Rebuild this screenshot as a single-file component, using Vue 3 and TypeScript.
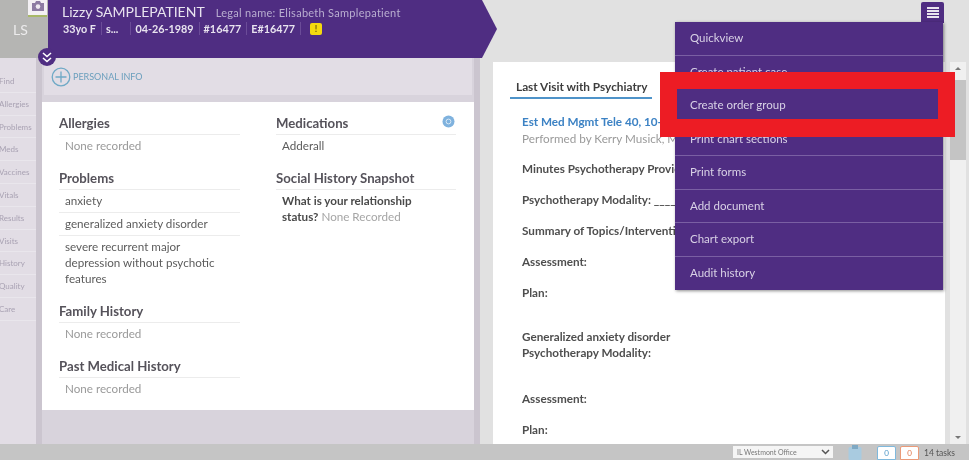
<template>
  <div class="page">
    <header class="top">
      <div class="avatar">
        <span class="camera">
          <svg width="14" height="12" viewBox="0 0 14 12">
            <path d="M1 3h3l1-2h4l1 2h3v8H1z" fill="#8d7ba3" />
            <circle cx="7" cy="6.6" r="2.3" fill="#efeaf2" />
          </svg>
        </span>
        <span class="initials">LS</span>
      </div>
      <div class="banner">
        <div class="name-row">
          <span class="name">Lizzy SAMPLEPATIENT</span>
          <span class="legal">Legal name: Elisabeth Samplepatient</span>
        </div>
        <div class="meta-row">
          <span v-for="item in meta" :key="item" class="meta">{{ item }}</span>
          <span class="alert">!</span>
        </div>
      </div>
      <span class="collapse">
        <svg width="12" height="13" viewBox="0 0 12 13" fill="none" stroke="#fff" stroke-width="1.6">
          <path d="M2 2l4 3.5L10 2M2 7l4 3.5L10 7" />
        </svg>
      </span>
    </header>

    <div class="body">
      <nav class="rail">
        <div v-for="item in rail" :key="item" class="rail-item">{{ item }}</div>
      </nav>

      <section class="left">
        <div class="personal">
          <svg width="20" height="20" viewBox="0 0 20 20" fill="none" stroke="#6fa9c6" stroke-width="1.3">
            <circle cx="10" cy="10" r="8.8" />
            <path d="M10 4.5v11M4.5 10h11" />
          </svg>
          <span>PERSONAL INFO</span>
        </div>
        <div class="summary">
          <div class="col">
            <template v-for="group in leftGroups" :key="group.title">
              <h3>{{ group.title }}</h3>
              <p v-for="row in group.rows" :key="row" class="row" :class="{ empty: group.empty }">{{ row }}</p>
            </template>
          </div>
          <div class="col">
            <h3>Medications</h3>
            <p class="row">Adderall</p>
            <h3>Social History Snapshot</h3>
            <p class="row question"><b>What is your relationship status?</b> <span>None Recorded</span></p>
          </div>
          <span class="gear">
            <svg width="13" height="13" viewBox="0 0 13 13">
              <circle cx="6.5" cy="6.5" r="6" fill="#7fb2de" />
              <circle cx="6.5" cy="6.5" r="2.4" fill="none" stroke="#d9e9f6" />
            </svg>
          </span>
        </div>
      </section>

      <section class="right">
        <div class="visit">
          <div class="tabs"><span class="tab">Last Visit with Psychiatry</span></div>
          <div class="note">
            <a class="link">Est Med Mgmt Tele 40, 10-28-2020</a>
            <p class="by">Performed by Kerry Musick, MD</p>
            <p v-for="line in note" :key="line.text" class="line" :class="line.gap">{{ line.text }}</p>
          </div>
        </div>
        <div class="scrollbar"><span class="arrow up"></span><span class="thumb"></span><span class="arrow down"></span></div>
      </section>
    </div>

    <footer class="foot">
      <div class="office">IL Westmont Office<svg width="9" height="6" viewBox="0 0 9 6" fill="none" stroke="#555" stroke-width="1.5"><path d="M1 1l3.5 3.5L8 1" /></svg></div>
      <svg class="clip" width="14" height="15" viewBox="0 0 14 15">
        <rect x="0.5" y="2" width="13" height="13" rx="1.5" fill="#a9cbe0" />
        <rect x="4" y="0" width="6" height="4" fill="#7fa9c4" />
      </svg>
      <span class="count blue">0</span>
      <span class="count orange">0</span>
      <span class="tasks">14 tasks</span>
    </footer>

    <button class="burger">
      <svg width="12" height="11" viewBox="0 0 12 11" fill="#e9e4ee">
        <rect y="0" width="12" height="2" /><rect y="3" width="12" height="2" /><rect y="6" width="12" height="2" /><rect y="9" width="12" height="2" />
      </svg>
    </button>
    <ul class="menu">
      <li v-for="item in menu" :key="item">{{ item }}</li>
    </ul>
    <div class="callout"></div>
  </div>
</template>

<script setup lang="ts">
const meta = ['33yo F', 's...', '04-26-1989', '#16477', 'E#16477']
const rail = ['Find', 'Allergies', 'Problems', 'Meds', 'Vaccines', 'Vitals', 'Results', 'Visits', 'History', 'Quality', 'Care']
const menu = ['Quickview', 'Create patient case', 'Create order group', 'Print chart sections', 'Print forms', 'Add document', 'Chart export', 'Audit history']

const leftGroups = [
  { title: 'Allergies', rows: ['None recorded'], empty: true },
  { title: 'Problems', rows: ['anxiety', 'generalized anxiety disorder', 'severe recurrent major depression without psychotic features'], empty: false },
  { title: 'Family History', rows: ['None recorded'], empty: true },
  { title: 'Past Medical History', rows: ['None recorded'], empty: true },
]

const note = [
  { text: 'Minutes Psychotherapy Provided:', gap: 'g1' },
  { text: 'Psychotherapy Modality: ______', gap: 'g2' },
  { text: 'Summary of Topics/Interventions:', gap: 'g2' },
  { text: 'Assessment:', gap: 'g2' },
  { text: 'Plan:', gap: 'g2' },
  { text: 'Generalized anxiety disorder', gap: 'g3' },
  { text: 'Psychotherapy Modality:', gap: 'g0' },
  { text: 'Assessment:', gap: 'g4' },
  { text: 'Plan:', gap: 'g2' },
]
</script>

<style>
html, body { margin: 0; overflow: hidden; }
</style>

<style scoped>
.page {
  position: relative;
  display: flex;
  flex-direction: column;
  width: 969px;
  height: 460px;
  overflow: hidden;
  background: #e1e1e1;
  font-family: Lato, "Open Sans", sans-serif;
  color: #4a4a4a;
  filter: blur(0.55px);
}

.top {
  position: relative;
  display: flex;
  height: 58px;
  flex: none;
}
.avatar {
  position: relative;
  width: 48px;
  background: #b5b5b3;
  display: flex;
  align-items: center;
  padding-left: 13px;
  box-sizing: border-box;
}
.initials { color: #ecebec; font-size: 14px; margin-top: 1px; }
.camera {
  position: absolute;
  top: 0;
  right: 1px;
  width: 19px;
  height: 15px;
  background: #f3f0f4;
  border-bottom: 2px solid #a8b868;
  display: flex;
  justify-content: center;
}
.banner {
  width: 449px;
  background: #4f2d82;
  clip-path: polygon(0 0, 434px 0, 100% 50%, 434px 100%, 0 100%);
  padding: 3px 0 0 15px;
  box-sizing: border-box;
  color: #e8e3ef;
}
.name-row { display: flex; align-items: baseline; gap: 11px; }
.name { font-size: 14px; line-height: 18px; margin-left: -1px; }
.legal { font-size: 11px; color: #b9aed0; letter-spacing: 0.28px; }
.meta-row { display: flex; align-items: center; font-size: 10.8px; font-weight: 700; margin-top: 1px; }
.meta { padding-right: 5px; margin-right: 4px; border-right: 1px solid #6b4c98; line-height: 13px; }
.meta:nth-child(2) { padding-right: 12px; }
.alert {
  width: 12px;
  height: 12px;
  margin-left: 5px;
  border-radius: 2px;
  background: #f5d90f;
  color: #6d5a10;
  font-size: 9px;
  line-height: 12px;
  text-align: center;
}
.collapse {
  position: absolute;
  left: 38px;
  top: 48px;
  z-index: 2;
  width: 18px;
  height: 18px;
  border-radius: 50%;
  background: #4f2d82;
  display: flex;
  align-items: center;
  justify-content: center;
}

.body { flex: 1; display: flex; min-height: 0; }
.rail {
  width: 36px;
  flex: none;
  background: #e2dde5;
  padding-top: 12px;
  box-sizing: border-box;
  overflow: hidden;
}
.rail-item {
  height: 22.8px;
  line-height: 22px;
  font-size: 8px;
  color: #a9a2b3;
  white-space: nowrap;
  margin-left: -1px;
  border-bottom: 1px solid #e9e6ec;
  box-sizing: border-box;
}

.left {
  width: 444px;
  flex: none;
  box-sizing: border-box;
  background: #d8d3dc;
  border-left: 6px solid #cbc5cf;
  border-right: 6px solid #cbc5cf;
}
.personal {
  height: 37px;
  margin: 0 2px;
  background: #e2dde5;
  display: flex;
  align-items: center;
  gap: 2px;
  padding: 0 8px 0 7px;
  box-sizing: border-box;
  color: #6b9fbd;
  font-size: 9px;
}
.summary {
  position: relative;
  margin-top: 7px;
  height: 308px;
  background: #fff;
  display: grid;
  grid-template-columns: 181px 180px;
  column-gap: 36px;
  padding: 9px 18px 0 17px;
  box-sizing: border-box;
}
.col { min-width: 0; }
h3 {
  margin: 0;
  padding: 4px 0 3px;
  font-size: 13.2px;
  line-height: 16px;
  font-weight: 700;
  color: #55525a;
  border-bottom: 1px solid #ececec;
}
.row {
  margin: 0;
  padding: 3px 6px;
  font-size: 11.65px;
  line-height: 16px;
  border-bottom: 1px solid #ececec;
  color: #5c5c5c;
}
.row:last-child { border-bottom: 0; }
.row.empty { color: #9a9a9a; border-bottom: 0; padding-bottom: 12px; }
.col > .row:has(+ h3) { border-bottom: 0; padding-bottom: 12px; }
.question b { color: #4a4a4a; }
.question span { color: #a5a5a5; }
.gear { position: absolute; top: 10px; right: 19px; }

.right {
  flex: 1;
  min-width: 0;
  display: flex;
  padding: 4px 3px 0 13px;
}
.visit { flex: 1; min-width: 0; background: #fff; padding: 13px 0 0 17px; overflow: hidden; }
.tab {
  display: inline-block;
  padding: 0 5px 3px 6px;
  font-size: 11.8px;
  line-height: 14px;
  font-weight: 700;
  color: #3d3d3d;
  border-bottom: 2px solid #4e93c9;
}
.note { padding: 15px 0 0 12px; font-size: 11.7px; line-height: 15px; }
.link { display: block; color: #3c82c4; font-weight: 700; }
.by { margin: 2px 0 0; color: #9a9a9a; }
.line { margin: 0; font-weight: 700; color: #4e4e4e; }
.g0 { margin-top: 1px; }
.g1 { margin-top: 15px; }
.g2 { margin-top: 16px; }
.g3 { margin-top: 29px; }
.g4 { margin-top: 31px; }
.scrollbar {
  width: 16px;
  margin-left: 5px;
  background: #f0f0f0;
  display: flex;
  flex-direction: column;
  align-items: center;
}
.thumb { width: 16px; height: 80px; margin-top: 10px; background: #c4c4c4; }
.arrow { border: 3px solid transparent; width: 0; height: 0; }
.arrow.up { border-bottom-color: #777; margin-top: 2px; }
.arrow.down { border-top-color: #777; margin-top: auto; margin-bottom: 2px; }

.foot {
  height: 16px;
  flex: none;
  background: #c5c5c5;
  display: flex;
  align-items: flex-end;
  justify-content: flex-end;
  padding-right: 9px;
  box-sizing: border-box;
  font-size: 8px;
  color: #555;
}
.office {
  width: 100px;
  height: 12px;
  margin: 0 15px 2px 0;
  padding: 0 3px 0 4px;
  box-sizing: border-box;
  background: #f5f5f5;
  display: flex;
  align-items: center;
  justify-content: space-between;
  font-size: 7px;
  color: #777;
}
.clip { margin-right: 15px; }
.count {
  width: 19px;
  height: 14px;
  margin-right: 4px;
  border-radius: 2px 2px 0 0;
  background: #fff;
  text-align: center;
  line-height: 13px;
  box-sizing: border-box;
  font-size: 8px;
}
.count.blue { border: 1px solid #7fb9dd; color: #4d97c7; }
.count.orange { border: 1px solid #eb9a78; color: #e0764a; margin-right: 5px; }
.tasks { width: 36px; font-size: 8.5px; line-height: 14px; }

.burger {
  position: absolute;
  top: 2px;
  left: 921px;
  width: 23px;
  height: 21px;
  padding: 0;
  border: 0;
  border-radius: 2px 2px 0 0;
  background: #4f2d82;
  display: flex;
  align-items: center;
  justify-content: center;
}
.menu {
  position: absolute;
  top: 22px;
  left: 675px;
  width: 268px;
  margin: 0;
  padding: 0;
  list-style: none;
  background: #4f2d82;
  box-shadow: 1px 1px 3px rgba(0, 0, 0, 0.45);
}
.menu li {
  height: 33.5px;
  line-height: 32px;
  padding-left: 15px;
  box-sizing: border-box;
  font-size: 11.5px;
  color: #d9d2e6;
  border-bottom: 1px solid #7a5fa3;
}
.menu li:last-child { border-bottom: 0; }
.callout {
  position: absolute;
  left: 660px;
  top: 72px;
  width: 295px;
  height: 65px;
  box-sizing: border-box;
  border: solid #ed1c24;
  border-width: 17px 17px 18px 17px;
}
</style>
